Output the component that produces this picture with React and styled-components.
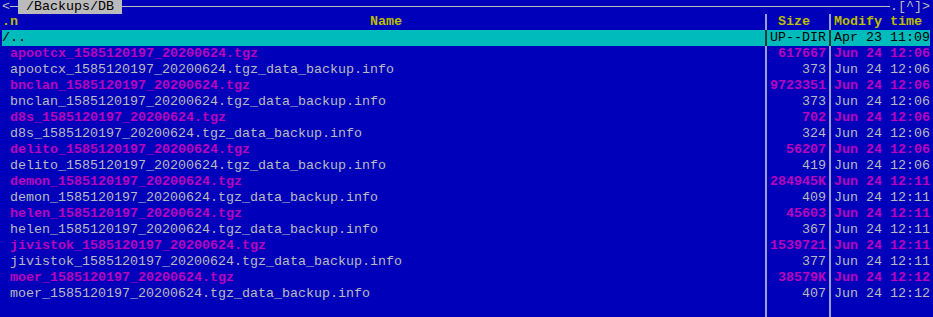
import styled, { createGlobalStyle } from 'styled-components'

const GlobalStyle = createGlobalStyle`
    html, body {
        margin: 0;
        padding: 0;
        background: #0000bb;
        overflow: hidden;
    }
    body {
        font-family: "Liberation Mono", "Courier New", monospace;
        font-size: 13.333px;
        color: #bbbbbb;
    }
`

const Panel = styled.div`
    width: 928px;
    height: 317px;
    padding-left: 2px;
    display: flex;
    flex-direction: column;
    overflow: hidden;
`

const TopBar = styled.div`
    display: flex;
    height: 14px;
    line-height: 14px;
    white-space: pre;
`

const Glyph = styled.span`
    display: block;
    width: ${props => props.cols * 8}px;
    color: #bbbbbb;
`

const Rule = styled.div`
    flex: ${props => props.grow ? 1 : '0 0 8px'};
    height: 1px;
    margin-top: 6px;
    background: #bbbbbb;
`

const PathTitle = styled.span`
    display: block;
    height: 14px;
    background: #bbbbbb;
    color: #000000;
`

const Row = styled.div`
    display: grid;
    grid-template-columns: 760px 8px 56px 8px 96px;
    height: 16px;
    line-height: 16px;
    white-space: pre;
    background: ${props => props.selected ? '#00bbbb' : 'transparent'};
    color: ${props => props.selected ? '#000000' : '#bbbbbb'};
`

const Filler = styled(Row)`
    flex: 1;
    height: auto;
`

const Cell = styled.div`
    overflow: hidden;
    text-align: ${props => props.right ? 'right' : 'left'};
    font-weight: ${props => props.archive ? 'bold' : 'normal'};
    color: ${props => props.archive ? '#bb00bb' : 'inherit'};
`

const HeadCell = styled.div`
    color: #bbbb00;
    font-weight: bold;
    padding-left: ${props => props.indent || 0}px;
`

const HeadName = styled.span`
    margin-left: 352px;
`

const Sep = styled.div`
    background: linear-gradient(
        to right,
        transparent 3px,
        ${props => props.dark ? '#0d3a3a' : '#9c9cd6'} 3px,
        ${props => props.dark ? '#0d3a3a' : '#9c9cd6'} 5px,
        transparent 5px
    );
`

const files = [
    ['apootcx', '617667', '12:06'],
    ['apootcx', '373', '12:06'],
    ['bnclan', '9723351', '12:06'],
    ['bnclan', '373', '12:06'],
    ['d8s', '702', '12:06'],
    ['d8s', '324', '12:06'],
    ['delito', '56207', '12:06'],
    ['delito', '419', '12:06'],
    ['demon', '284945K', '12:11'],
    ['demon', '409', '12:11'],
    ['helen', '45603', '12:11'],
    ['helen', '367', '12:11'],
    ['jivistok', '1539721', '12:11'],
    ['jivistok', '377', '12:11'],
    ['moer', '38579K', '12:12'],
    ['moer', '407', '12:12'],
]

const FileRow = ({ host, size, time, archive }) => {
    const name = `${host}_1585120197_20200624.tgz${archive ? '' : '_data_backup.info'}`
    return (
        <Row>
            <Cell archive={archive}>{' ' + name}</Cell>
            <Sep />
            <Cell archive={archive} right>{size}</Cell>
            <Sep />
            <Cell archive={archive}>{`Jun 24 ${time}`}</Cell>
        </Row>
    )
}

const App = () => {
    return (
        <>
            <GlobalStyle />
            <Panel>
                <TopBar>
                    <Glyph cols={1}>{'<'}</Glyph>
                    <Rule />
                    <PathTitle>{' /Backups/DB '}</PathTitle>
                    <Rule grow />
                    <Glyph cols={5}>{'.[^]>'}</Glyph>
                </TopBar>
                <Row>
                    <HeadCell>.n<HeadName>Name</HeadName></HeadCell>
                    <Sep />
                    <HeadCell indent={8}>Size</HeadCell>
                    <Sep />
                    <HeadCell>Modify time</HeadCell>
                </Row>
                <Row selected>
                    <Cell>/..</Cell>
                    <Sep dark />
                    <Cell right>UP--DIR</Cell>
                    <Sep dark />
                    <Cell>Apr 23 11:09</Cell>
                </Row>
                {files.map(([host, size, time], i) =>
                    <FileRow key={i} host={host} size={size} time={time} archive={i % 2 === 0} />
                )}
                <Filler>
                    <div />
                    <Sep />
                    <div />
                    <Sep />
                    <div />
                </Filler>
            </Panel>
        </>
    )
}

export default App
